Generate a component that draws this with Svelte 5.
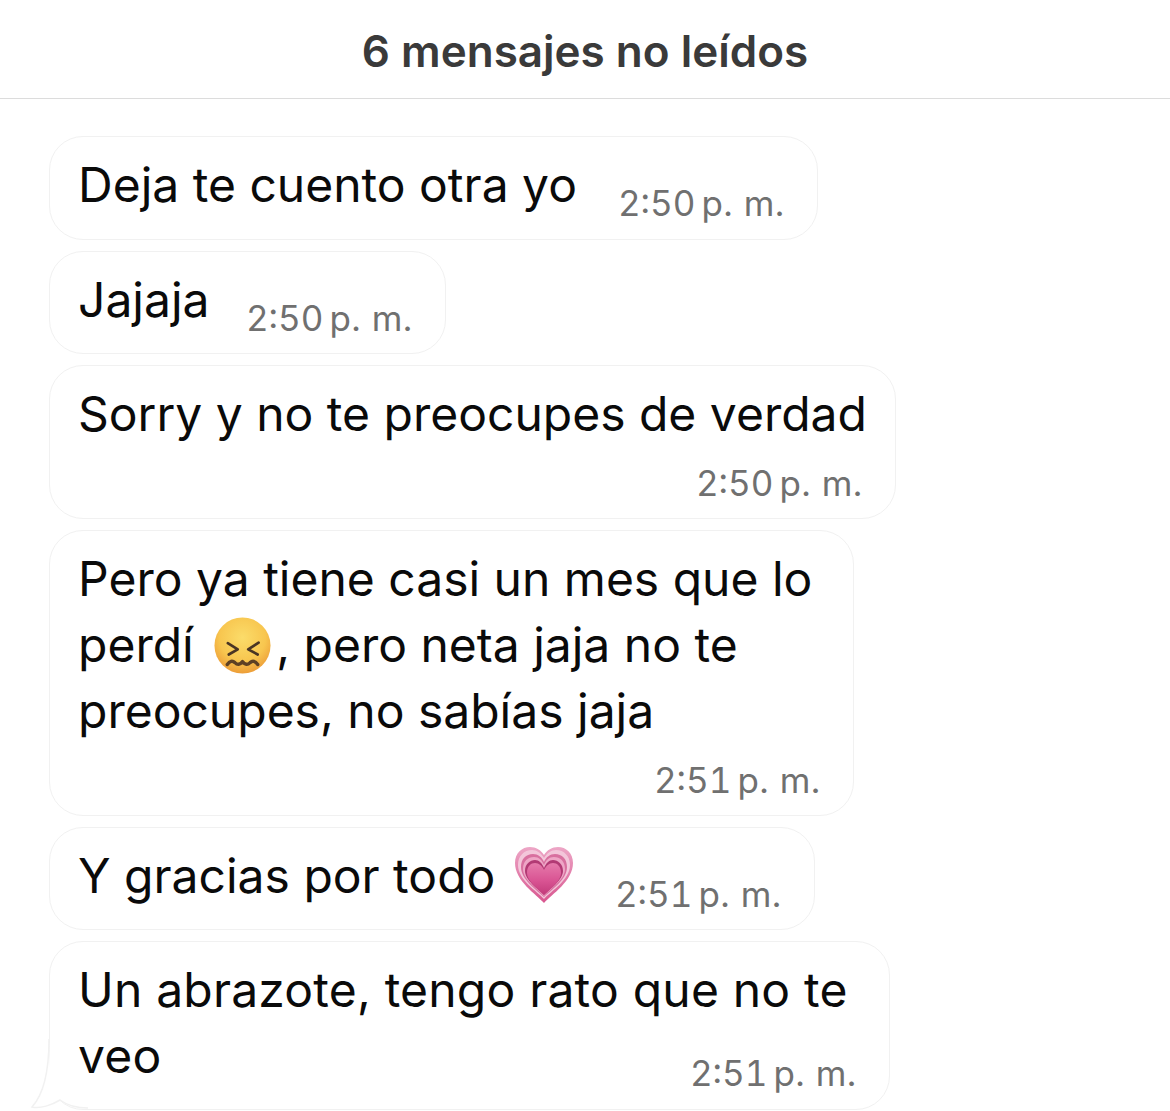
<script>
  const times = { first: '2:50', second: '2:51' };
</script>

{#snippet face()}
  <svg class="emoji face" viewBox="0 0 60 60" aria-hidden="true">
    <defs>
      <radialGradient id="faceFill" cx="50%" cy="36%" r="66%">
        <stop offset="0" stop-color="#fbdc6a" />
        <stop offset="0.62" stop-color="#f8c64f" />
        <stop offset="1" stop-color="#ec9a36" />
      </radialGradient>
    </defs>
    <circle cx="30" cy="30" r="29.5" fill="url(#faceFill)" />
    <path d="M14.5 27.5 L25 34 L15.5 39.5" fill="none" stroke="#4a3524" stroke-width="2.8" stroke-linecap="round" stroke-linejoin="round" />
    <path d="M47 27 L36 34 L46 39.5" fill="none" stroke="#4a3524" stroke-width="2.8" stroke-linecap="round" stroke-linejoin="round" />
    <path d="M14 50 Q18 44.5 22 48 Q26 52 30 47 Q34 52 38 48 Q42 44.5 46 50" fill="none" stroke="#5e4024" stroke-width="3.6" stroke-linecap="round" stroke-linejoin="round" />
  </svg>
{/snippet}

{#snippet heart()}
  <svg class="emoji heart" viewBox="0 0 60 60" aria-hidden="true">
    <defs>
      <linearGradient id="h1" x1="0" y1="0" x2="0" y2="1">
        <stop offset="0" stop-color="#eda6c6" />
        <stop offset="1" stop-color="#d8568f" />
      </linearGradient>
      <linearGradient id="h3" x1="0" y1="0" x2="0" y2="1">
        <stop offset="0" stop-color="#e67aab" />
        <stop offset="0.55" stop-color="#d95493" />
        <stop offset="1" stop-color="#c23a7a" />
      </linearGradient>
    </defs>
    <path d="M30 58 C22 49 1 36 1 18 C1 8 8 2 16 2 C22 2 27 5 30 10 C33 5 38 2 44 2 C52 2 59 8 59 18 C59 36 38 49 30 58 Z" fill="url(#h1)" />
    <path d="M30 54 C23 46 4 35 4 20 C4 11 10 5 18 5 C23 5 27 8 30 13 C33 8 37 5 42 5 C50 5 56 11 56 20 C56 35 37 46 30 54 Z" fill="#f3c6da" />
    <path d="M30 52 C23 45 7 35 7 22 C7 14 12 9 19 9 C24 9 28 12 30 17 C32 12 36 9 41 9 C48 9 53 14 53 22 C53 35 37 45 30 52 Z" fill="#d8709f" />
    <path d="M30 51 C24 44 9 35 9 24 C9 16 14 12 20 12 C25 12 28 15 30 20 C32 15 35 12 40 12 C46 12 51 16 51 24 C51 35 36 44 30 51 Z" fill="#eea6c6" />
    <path d="M30 50 C24 44 11 35 11 26 C11 19 16 15 21 15 C25 15 28 18 30 23 C32 18 35 15 39 15 C44 15 49 19 49 26 C49 35 36 44 30 50 Z" fill="#b23a74" />
    <path d="M30 50 C24 44 13 36 13 28 C13 21 17 18 21 18 C25 18 28 21 30 25 C32 21 35 18 39 18 C43 18 47 21 47 28 C47 36 36 44 30 50 Z" fill="url(#h3)" />
  </svg>
{/snippet}

{#snippet time(t)}
  <span class="time"><span class="clock">{t}</span><span class="ampm">p. m.</span></span>
{/snippet}

<div class="page">
  <header class="top">6 mensajes no leídos</header>
  <div class="list">
    <div class="bubble row b1">
      <div class="text">Deja te cuento otra yo</div>
      {@render time(times.first)}
    </div>
    <div class="bubble row b2">
      <div class="text">Jajaja</div>
      {@render time(times.first)}
    </div>
    <div class="bubble stack b3">
      <div class="text">Sorry y no te preocupes de verdad</div>
      {@render time(times.first)}
    </div>
    <div class="bubble stack b4">
      <div class="text">Pero ya tiene casi un mes que lo<br />perdí {@render face()}, pero neta jaja no te<br />preocupes, no sabías jaja</div>
      {@render time(times.second)}
    </div>
    <div class="bubble row b5">
      <div class="text">Y gracias por todo {@render heart()}</div>
      {@render time(times.second)}
    </div>
    <div class="bubble stack b6">
      <div class="text">Un abrazote, tengo rato que no te<br />veo</div>
      {@render time(times.second)}
      <svg class="tail" viewBox="0 0 60 71" aria-hidden="true">
        <path d="M19 0 C19 30 14 55 2 68 C10 70 22 66 30 61 C38 67 46 69 58 69 L20 30 Z" fill="#fff" />
        <path d="M19 0 C19 30 14 55 2 68 C10 70 22 66 30 61 C38 67 46 69 58 69" fill="none" stroke="#f1f1f1" stroke-width="1.5" />
      </svg>
    </div>
  </div>
</div>

<style>
  :global(body) {
    margin: 0;
    background: #fff;
  }
  .page {
    width: 1170px;
    height: 1111px;
    overflow: hidden;
    font-family: Inter, "Liberation Sans", sans-serif;
    background: #fff;
  }
  .top {
    height: 99px;
    box-sizing: border-box;
    border-bottom: 1.5px solid #dcdcdc;
    text-align: center;
    padding-top: 24px;
    font-size: 44px;
    line-height: 54px;
    font-weight: 600;
    color: #3a3a3a;
  }
  .list {
    display: flex;
    flex-direction: column;
    align-items: flex-start;
    gap: 11px;
    padding: 37px 0 0 49px;
  }
  .bubble {
    box-sizing: border-box;
    border: 1.5px solid #f1f1f1;
    border-radius: 34px;
    background: #fff;
    padding: 15px 30px 0 28px;
    color: #0a0a0a;
    position: relative;
  }
  .text {
    font-size: 48px;
    line-height: 66px;
    white-space: nowrap;
  }
  .b6 .text {
    letter-spacing: 0.2px;
  }
  .row {
    display: flex;
    align-items: flex-start;
    justify-content: space-between;
  }
  .stack {
    display: flex;
    flex-direction: column;
  }
  .time {
    font-size: 35px;
    line-height: 40px;
    color: #707070;
    white-space: nowrap;
    letter-spacing: 0.3px;
    margin-right: 2px;
  }
  .clock {
    margin-right: 6px;
    font-variant-numeric: tabular-nums;
    letter-spacing: 0;
  }
  .row .time {
    margin-top: 31px;
  }
  .stack .time {
    align-self: flex-end;
    margin-top: 16px;
  }
  .b1 { width: 769px; height: 104px; }
  .b2 { width: 397px; height: 103px; }
  .b3 { width: 847px; height: 154px; }
  .b4 { width: 805px; height: 286px; }
  .b5 { width: 766px; height: 103px; }
  .b6 { width: 841px; height: 169px; }
  .stack.b6 .time { margin-top: -36px; }
  .emoji {
    display: inline-block;
    vertical-align: middle;
  }
  .face {
    width: 57px;
    height: 57px;
    margin: -7px 5px 0 7px;
  }
  .heart {
    width: 60px;
    height: 60px;
    margin: -10px 0 0 5px;
  }
  .tail {
    position: absolute;
    left: -20px;
    bottom: -1px;
    width: 60px;
    height: 71px;
  }
</style>
